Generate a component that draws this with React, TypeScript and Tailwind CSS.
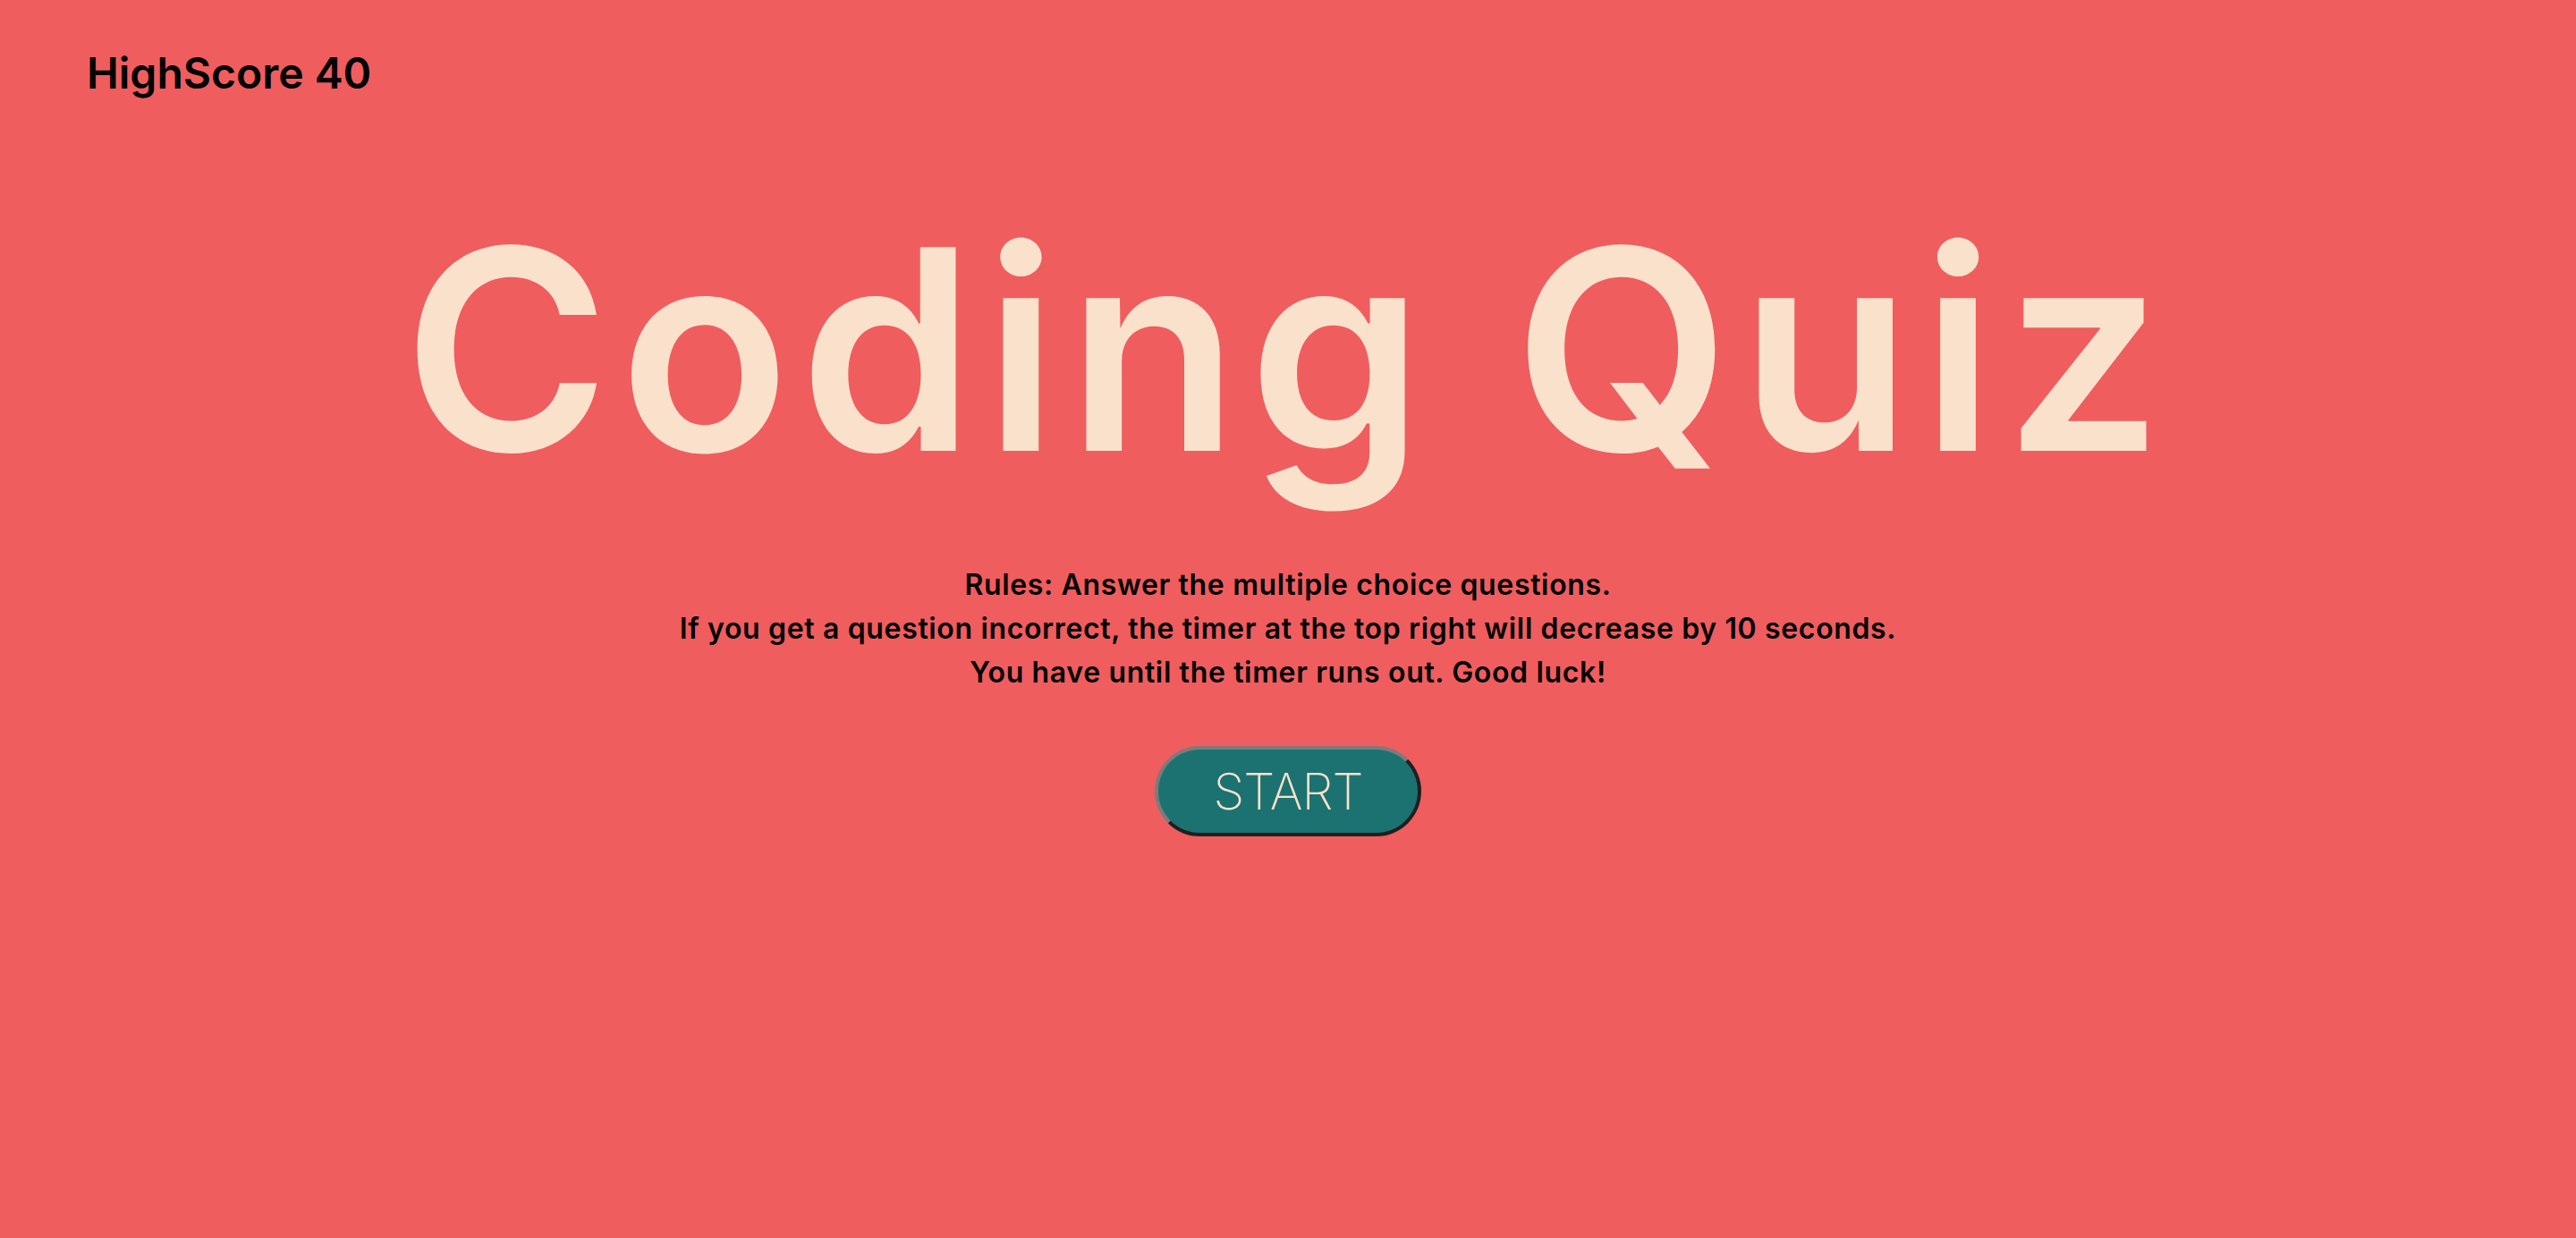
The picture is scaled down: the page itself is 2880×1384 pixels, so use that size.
export default function App() {
  return (
    <div className="min-h-screen w-full bg-[#f05d5e] font-['Inter',sans-serif]">
      <header className="px-[97px] pt-[52px]">
        <h2 className="text-[48px] font-semibold leading-[60px] text-black">HighScore 40</h2>
      </header>

      <main className="flex flex-col items-center">
        <h1 className="mt-[88px] text-[313px] font-semibold leading-[380px] tracking-[11px] text-[#fae1cb]">
          Coding Quiz
        </h1>
        <div className="mt-[49px] text-center text-[32px] font-semibold leading-[49px] tracking-[0.65px] text-black">
          <p>Rules: Answer the multiple choice questions.</p>
          <p>If you get a question incorrect, the timer at the top right will decrease by 10 seconds.</p>
          <p>You have until the timer runs out. Good luck!</p>
        </div>
        <button className="mt-[58px] h-[101px] w-[298px] rounded-full border-4 border-t-[#7b7b7b] border-l-[#7b7b7b] border-r-[#1f1f1f] border-b-[#1f1f1f] bg-[#1b7271] text-[56px] font-extralight leading-none tracking-[-1px] text-[#fae1cb]">
          START
        </button>
      </main>
    </div>
  );
}
